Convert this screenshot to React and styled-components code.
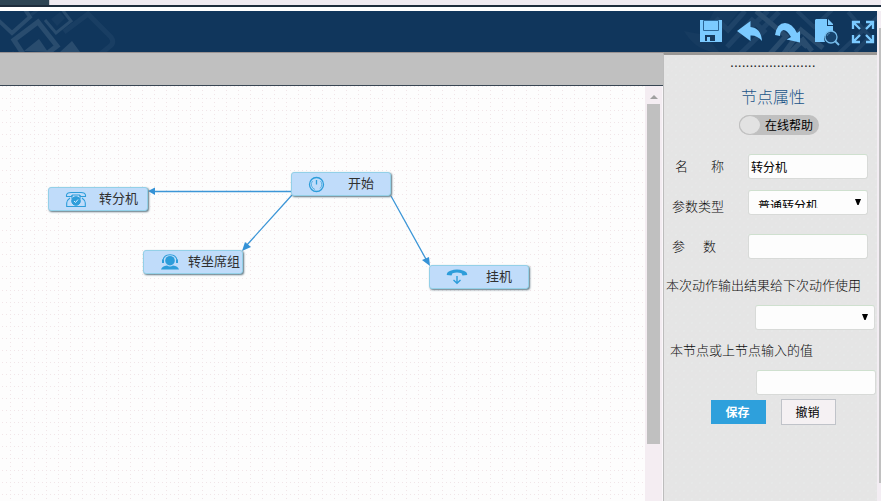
import React from 'react';
import styled, { createGlobalStyle } from 'styled-components';

const Global = createGlobalStyle`
  * { box-sizing: border-box; }
  body { margin: 0; overflow: hidden; background: #fff; font-family: "Liberation Sans", "Noto Sans CJK SC", sans-serif; }
  svg { display: block; }
`;

const Page = styled.div`
  width: 881px; height: 501px; display: flex; flex-direction: column; overflow: hidden;
`;
const TopStrip = styled.div`
  height: 7px; flex: none; display: flex; background: #f0ebf1; border-bottom: 2px solid #1e2d3c;
`;
const StripTab = styled.div`
  width: 50px; height: 5px; background: #2e4554; border-right: 1px solid #c9c9cf;
`;
const Shell = styled.div`
  flex: 1; min-height: 0; margin-top: 4px; display: flex;
`;
const Designer = styled.div`
  width: 877px; display: flex; flex-direction: column;
`;
const PageRail = styled.div`
  width: 4px; background: #f3edf3; padding: 17px 0 18px 2px;
`;
const PageThumb = styled.div`
  height: 455px; background: #c0c0c0;
`;
const Header = styled.header`
  height: 41px; flex: none; display: flex; background: #10365c;
`;
const Fill = styled.div` flex: 1; `;
const Actions = styled.div`
  width: 193px; height: 41px;
`;
const Body = styled.div` flex: 1; min-height: 0; display: flex; `;
const Work = styled.main`
  width: 663px; display: flex; flex-direction: column;
`;
const ToolBar = styled.div`
  height: 34px; flex: none; background: #c0c0c0; border-top: 1px solid #9a9393; border-bottom: 1px solid #384653;
`;
const CanvasRow = styled.div` flex: 1; min-height: 0; display: flex; `;
const Canvas = styled.div`
  position: relative; width: 645px; overflow: hidden; background: #fdfdfd;
`;
const Wires = styled.svg` position: absolute; left: 0; top: 0; `;
const Node = styled.div`
  position: absolute; left: ${p => p.$x}px; top: ${p => p.$y}px;
  width: 100px; height: 24px; display: flex; align-items: center; padding-left: 16px;
  background: #c0dcfa; border: 1px solid #93d0e8; border-radius: 3px;
  box-shadow: 1px 1px 2px #5b7480;
  font-size: 13px; line-height: 22px; color: #303030; white-space: nowrap;
  & span { margin-left: ${p => p.$gap}px; }
`;
const Scroll = styled.div`
  width: 18px; background: #f4edf2; padding: 0 2px; border-right: 1px solid #faf7fa;
`;
const ScrollArrow = styled.div`
  height: 18px; display: flex; align-items: center; justify-content: center; padding-top: 3px;
`;
const ScrollThumb = styled.div` width: 13px; height: 340px; background: #c0c0c0; `;

const Panel = styled.aside`
  width: 214px; display: flex; flex-direction: column;
  border-left: 1px solid #bdbdbd; border-top: 3px solid #999795; background-color: #e5e5e5;
  background-image: radial-gradient(circle, #e9eeed 0.5px, transparent 0.8px), radial-gradient(circle, #ebe7e9 0.5px, transparent 0.8px);
  background-size: 8px 8px, 8px 8px; background-position: 0 0, 4px 4px;
`;
const Dots = styled.div`
  height: 16px; flex: none; padding-left: 66px; font-size: 14px; line-height: 14px; color: #222;
`;
const Title = styled.h2`
  margin: 14px 0 0 77px; height: 24px; font-size: 16px; line-height: 26px; font-weight: 300; color: #215488;
`;
const Toggle = styled.div`
  margin: 6px 0 0 75px; width: 80px; height: 20px; flex: none; display: flex; border-radius: 10px; background: #c0c0c0;
  font-size: 12px; line-height: 22px; color: #000;
`;
const Knob = styled.i`
  width: 22px; height: 20px; margin-right: 4px; border: 1px solid #c0c0c0; border-radius: 50%; background: #e2e2e2;
`;
const Field = styled.div`
  height: 25px; flex: none; display: flex; align-items: center;
  margin-top: ${p => p.$top}px; padding-left: ${p => p.$left}px;
`;
const Label = styled.label`
  width: ${p => p.$w}px; display: flex; gap: ${p => p.$gap || 0}px; font-size: 13px; font-weight: 300; color: #0c0c0c; white-space: nowrap;
  padding-top: ${p => p.$drop || 0}px; padding-bottom: ${p => p.$lift || 0}px;
`;
const Wide = styled(Label)`
  height: 20px; line-height: 20px; width: auto; flex: none;
  margin: ${p => p.$top}px 0 0 ${p => p.$left}px;
`;
const Box = styled.div`
  width: 120px; height: 25px; flex: none; display: flex; padding-left: 2px;
  background: #fdfdfd; border: 1px solid #d8dad8; border-top-color: #cfe0cf; border-radius: 3px;
  font-size: 12px; line-height: 26px; color: #000; white-space: nowrap;
`;
const Select = styled(Box)`
  justify-content: space-between; padding: 0 6px 0 9px;
`;
const Clipped = styled.span`
  height: 8px; margin-top: 9px; line-height: 12px; overflow: hidden;
`;
const Caret = styled.svg` margin: 8px 0 0 auto; `;
const Buttons = styled.div`
  display: flex; align-items: center; gap: 15px; padding-left: 47px; margin-top: 4px; height: 26px;
`;
const Button = styled.button`
  width: 55px; height: ${p => (p.$primary ? 24 : 26)}px; padding: 1px 2px 0 0; font-family: inherit; font-size: 12px; line-height: 22px;
  font-weight: ${p => (p.$primary ? 700 : 400)};
  color: ${p => (p.$primary ? '#fff' : '#000')};
  background: ${p => (p.$primary ? '#2ea0dc' : '#f5f1f3')};
  border: ${p => (p.$primary ? 0 : '1px solid #c0c3c9')};
`;

const DecoLeft = () => (
  <svg width="120" height="41" viewBox="0 0 120 41" fill="none">
    <path d="M64 21 88 3 111 26Q115 32 109 36L98 45" stroke="#193e63" strokeWidth="5" />
    <path d="M-2 9 12 22 30 6 24-3" stroke="#294c6e" strokeWidth="4" />
    <path d="M14 29 38 11 57 35 31 55Z" stroke="#294c6e" strokeWidth="5" />
    <path d="M24 40 39 28 48 41Z M60 41 72 30 80 41Z" fill="#294c6e" />
    <path d="M45 9 56 22 71 10 61-3" stroke="#294c6e" strokeWidth="3" />
    <path d="M51 8 57 15 65 7 60 1" fill="#173c61" />
    <path d="M12 41 20 49 M39-2 31 4" stroke="#193e63" strokeWidth="3" />
  </svg>
);

const HeaderIcons = () => (
  <svg width="193" height="41" viewBox="684 11 193 41" fill="none">
    <path d="M684 31Q696 52 720 53L705 35ZM714 11H739L713 43 702 34Z" fill="#163b60" />
    <path d="M716 18 728 30 745 11M727 47 752 20 764 31 735 59M768 11 751 27 757 34 779 12" stroke="#1e4368" strokeWidth="5" />
    <path d="M756 11 786 36 768 56M790 32 807 47M782 56 801 30 823 48M790 53 803 40 812 51" stroke="#294c6e" strokeWidth="5" />
    <path d="M797 11 814 27 832 10M837 55 881 14M848 12 870 37 855 52" stroke="#1e4368" strokeWidth="4" />
    <g fill="#7bcaff">
      <path fillRule="evenodd" d="M700 20H722V42H700ZM705 35V41H707V37H710V41H715V35Z" />
      <path d="M703.5 20.5H718.5V30.5H703.5Z" stroke="#2a6495" />
      <path d="M737 31 750.5 21V27Q761 28 762 41Q757 35 750.5 35.5V41Z" />
      <path d="M775 35Q777 23 785 23Q792 23 797 33L800 31V42.500L786.500 39.500L791 37Q787 30 783.500 30Q780 31 780 36Z" />
      <path d="M815 20 816 19H827V26H833V32A7 7 0 0 0 825 42H815Z" />
      <path d="M828 19 833 24V25H828Z" />
    </g>
    <circle cx="831" cy="37" r="6" fill="#17446e" stroke="#75bbea" strokeWidth="1.3" />
    <path d="m835 41 4 4" stroke="#75bbea" strokeWidth="2" />
    <path d="M830 33a4 4 0 0 0-3 3" stroke="#4680ad" />
    <path
      d="M853 29V22H860M853 22 860 29M866 22H873V29M873 22 866 29M853 35V42H860M853 42 860 35M873 35V42H866M873 42 866 35"
      stroke="#7bcaff" strokeWidth="2.300"
    />
  </svg>
);

const Phone = () => (
  <svg width="22" height="17" viewBox="0 0 22 17" fill="none" stroke="#2d9dda">
    <path d="M1.5 5.5V4Q2 1.5 6 1.5H16Q20 1.5 20.5 4V5.5H15.5L14.5 4H7.5L6.5 5.5Z" strokeWidth="1.1" />
    <path d="M5 7Q2 9 1.7 12V15.5H20.3V12Q20 9 17 7M7 4V8M15 4V8" strokeWidth="1.1" />
    <circle cx="11" cy="10" r="4.3" fill="#2d9dda" />
    <path d="m9 10 1.5 1.5L13 8.5" stroke="#d8edff" />
  </svg>
);
const Agent = () => (
  <svg width="20" height="16" viewBox="0 0 20 16" fill="#2d9dda">
    <circle cx="10" cy="6.7" r="4.8" />
    <path d="M1 15.5Q2 12 7 11.5Q10 13.5 13 11.5Q18 12 19 15.5Z" />
    <path d="M3 8V6Q4 .8 10 .8T17 6V8" fill="none" stroke="#2d9dda" strokeWidth="1.1" />
    <path d="M2 5.5H4V9H2ZM16 5.5H18V9H16Z" />
  </svg>
);
const Clock = () => (
  <svg width="17" height="17" viewBox="0 0 17 17" fill="none" stroke="#2d9dda">
    <circle cx="8.5" cy="8.5" r="7" strokeWidth="1.3" />
    <path d="M8.5 4V8.500" strokeWidth="1.300" />
    <path d="M4.500 5A5.400 5.400 0 0 0 7 13.500M12.500 5A5.400 5.400 0 0 1 12 12.500" strokeWidth=".7" />
  </svg>
);
const Hangup = () => (
  <svg width="22" height="16" viewBox="0 0 22 16" fill="none" stroke="#2d9dda">
    <path d="M.8 6Q.5 3 4.5 1.7 11-.5 17.5 1.7 21.5 3 21.2 6L16.5 6.4 15.5 4.2Q11 2.6 6.5 4.2L5.5 6.4Z" fill="#2d9dda" stroke="none" />
    <path d="M11 7V14M7.5 11 11 14.2 14.5 11" strokeWidth="1.4" />
  </svg>
);
const Down = () => (
  <Caret width="6" height="7" viewBox="0 0 6 7"><path d="M0 0H6L3.6 6H2.4Z" /></Caret>
);

const nodes = [
  { x: 291, y: 86, gap: 23, Icon: Clock, text: '开始' },
  { x: 48, y: 101, gap: 12, Icon: Phone, text: '转分机' },
  { x: 143, y: 164, gap: 8, Icon: Agent, text: '转坐席组' },
  { x: 429, y: 179, gap: 18, Icon: Hangup, text: '挂机' },
];

export default function App() {
  return (
    <Page>
      <Global />
      <TopStrip><StripTab /></TopStrip>
      <Shell>
        <Designer>
          <Header><DecoLeft /><Fill /><Actions><HeaderIcons /></Actions></Header>
          <Body>
            <Work>
              <ToolBar />
              <CanvasRow>
                <Canvas>
                  <Wires width="645" height="415">
                    <defs>
                      <pattern id="grid" width="12" height="12" patternUnits="userSpaceOnUse">
                        <path d="M2 0h1v1h-1zM6 0h1v1h-1zM10 0h1v1h-1zM10 4h1v1h-1zM10 8h1v1h-1z" fill="#f1e5e8" />
                      </pattern>
                    </defs>
                    <rect width="645" height="415" fill="url(#grid)" />
                    <g stroke="#3c96d7" strokeWidth="1.3">
                      <path d="M291 105.5H153M292 109 246 160M391 110 427 175" />
                    </g>
                    <path d="M148 105 155 101.5V109ZM242 165 245 156 251 161ZM430 180 422 174 429 171Z" fill="#3592d6" />
                  </Wires>
                  {nodes.map(({ x, y, gap, Icon, text }) => (
                    <Node key={text} $x={x} $y={y} $gap={gap}><Icon /><span>{text}</span></Node>
                  ))}
                </Canvas>
                <Scroll>
                  <ScrollArrow><svg width="8" height="4"><path d="M0 4 4 0 8 4Z" fill="#a0a0a0" /></svg></ScrollArrow>
                  <ScrollThumb />
                </Scroll>
              </CanvasRow>
            </Work>
            <Panel>
              <Dots>......................</Dots>
              <Title>节点属性</Title>
              <Toggle><Knob />在线帮助</Toggle>
              <Field $top={19} $left={11}>
                <Label $w={73} $gap={23} $lift={2}><span>名</span><span>称</span></Label><Box>转分机</Box>
              </Field>
              <Field $top={11} $left={8}>
                <Label $w={76} $drop={5}>参数类型</Label><Select><Clipped>普通转分机</Clipped><Down /></Select>
              </Field>
              <Field $top={19} $left={8}>
                <Label $w={76} $gap={18} $lift={2}><span>参</span><span>数</span></Label><Box />
              </Field>
              <Wide $top={17} $left={2}>本次动作输出结果给下次动作使用</Wide>
              <Field $top={9} $left={91}><Select><Down /></Select></Field>
              <Wide $top={11} $left={6}>本节点或上节点输入的值</Wide>
              <Field $top={9} $left={92}><Box /></Field>
              <Buttons><Button $primary>保存</Button><Button>撤销</Button></Buttons>
            </Panel>
          </Body>
        </Designer>
        <PageRail><PageThumb /></PageRail>
      </Shell>
    </Page>
  );
}
